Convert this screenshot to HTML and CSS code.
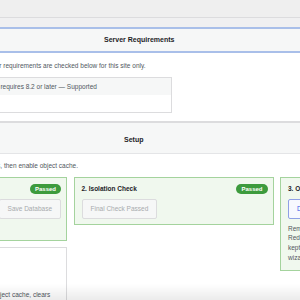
FILE: index.html
```html
<!DOCTYPE html>
<html lang="en">
<head>
<meta charset="utf-8">
<title>Redis Object Cache Setup</title>
<link rel="stylesheet" href="styles.css">
</head>
<body>
<div class="page">
  <div class="page-top">
    <div class="notice-end"></div>
  </div>

  <section class="panel panel-req">
    <h2 class="panel-head">Server Requirements</h2>
    <div class="panel-body">
      <p class="desc">Your server requirements are checked below for this site only.</p>
      <div class="req-box">
        <div class="req-row">PHP 8.3 requires 8.2 or later — Supported</div>
        <div class="req-row req-row-blank"></div>
      </div>
    </div>
  </section>

  <section class="panel panel-setup">
    <h2 class="panel-head">Setup</h2>
    <div class="panel-body">
      <p class="desc">Save the Redis connection, and run all checks, then enable object cache.</p>
      <div class="steps">
        <div class="step-col">
          <div class="card card-passed">
            <div class="card-head">
              <h3 class="card-title">1. Connection</h3>
              <span class="badge">Passed</span>
            </div>
            <div class="actions">
              <span class="field">Database 0</span>
              <button class="btn" disabled>Save Database</button>
            </div>
            <p class="card-text">Saved to wp-config.php</p>
          </div>
          <div class="card">
            <div class="card-head">
              <h3 class="card-title">4. Disconnect</h3>
            </div>
            <div class="actions">
              <button class="btn">Disable</button>
            </div>
            <p class="card-text card-help">Disables Redis for this site, removes the object cache, clears the drop-in and flushes the test keys.</p>
          </div>
        </div>

        <div class="step-col">
          <div class="card card-passed">
            <div class="card-head">
              <h3 class="card-title">2. Isolation Check</h3>
              <span class="badge">Passed</span>
            </div>
            <div class="actions">
              <button class="btn" disabled>Final Check Passed</button>
            </div>
          </div>
        </div>

        <div class="step-col">
          <div class="card card-passed card-open">
            <div class="card-head">
              <h3 class="card-title">3. Object Cache</h3>
            </div>
            <div class="actions">
              <button class="btn btn-blue">Drop Test Keys</button>
            </div>
            <p class="card-text">Removes the temporary isolation keys from<br>Redis. Your connection settings are<br>kept so you can run this setup<br>wizard again at any time.</p>
          </div>
        </div>
      </div>
    </div>
  </section>
</div>
<div class="bottom-fade"></div>
</body>
</html>
```

FILE: styles.css
```css
* {
  box-sizing: border-box;
}

html,
body {
  margin: 0;
  padding: 0;
}

body {
  width: 300px;
  height: 300px;
  overflow: hidden;
  background: #ffffff;
  font-family: "Liberation Sans", Arial, sans-serif;
  font-size: 6.5px;
  line-height: 1.5;
  color: #50575e;
}

.page {
  width: 640px;
  margin-left: -141px;
}

.page-top {
  background: #f0f0f1;
  padding-bottom: 9px;
}

.notice-end {
  height: 18px;
  background: #efefef;
  border-bottom: 1px solid #dcdcde;
}

.panel-head {
  margin: 0;
  font-size: 7px;
  font-weight: 700;
  color: #1d2327;
  background: #f6f7f7;
}

.panel-req .panel-head {
  height: 26px;
  line-height: 22px;
  border-top: 2px solid #a9bfe9;
  border-bottom: 2px solid #a9bfe9;
  padding-left: 245px;
}

.panel-req .panel-body {
  padding: 8px 0 8px 109.5px;
}

.desc {
  margin: 0 0 6px;
}

.req-box {
  width: 203px;
  border: 1px solid #dcdcde;
}

.req-row {
  height: 17px;
  line-height: 17px;
  padding-left: 5px;
  background: #f6f7f7;
  color: #50575e;
}

.req-row-blank {
  background: #ffffff;
}

.panel-setup {
  border-top: 2px solid #dcdcde;
}

.panel-setup .panel-head {
  height: 31px;
  line-height: 29px;
  padding-top: 2px;
  padding-left: 265px;
  border-bottom: 1px solid #e4e5e7;
}

.panel-setup .panel-body {
  padding: 7px 8px;
}

.steps {
  display: flex;
  align-items: flex-start;
  gap: 6.5px;
}

.step-col {
  width: 200px;
  display: flex;
  flex-direction: column;
  gap: 6px;
}

.card {
  border: 1px solid #dcdcde;
  background: #ffffff;
  padding: 6px 5px 5px 7px;
}

.card-passed {
  background: #f0f8ee;
  border-color: #a4d39d;
}

.card-head {
  display: flex;
  align-items: center;
  justify-content: space-between;
  height: 10px;
}

.card-title {
  margin: 0;
  font-size: 6.5px;
  font-weight: 700;
  color: #1d2327;
}

.badge {
  display: inline-block;
  height: 10px;
  line-height: 10px;
  padding: 0 5px;
  border-radius: 5px;
  background: #3d9b3d;
  color: #ffffff;
  font-size: 6px;
  font-weight: 700;
}

.actions {
  display: flex;
  align-items: center;
  gap: 4px;
  margin-top: 5px;
}

.field {
  flex: 1;
  height: 20px;
  line-height: 18px;
  padding-left: 5px;
  border: 1px solid #dcdcde;
  background: #ffffff;
  color: #2c3338;
}

.btn {
  height: 20px;
  padding: 0 8px;
  font-family: inherit;
  font-size: 6.5px;
  border: 1px solid #dcdcde;
  border-radius: 2px;
  background: #f6f7f7;
  color: #a7aaad;
}

.btn-blue {
  background: #f7f8ff;
  border-color: #8fa0e6;
  color: #3858e9;
}

.card-text {
  margin: 5px 0 2px;
  color: #50575e;
}

.card-help {
  margin-top: 1px;
}

.bottom-fade {
  position: fixed;
  left: 0;
  right: 0;
  bottom: 0;
  height: 16px;
  background: linear-gradient(to bottom, rgba(0, 0, 0, 0), rgba(0, 0, 0, 0.08));
  pointer-events: none;
}
```
